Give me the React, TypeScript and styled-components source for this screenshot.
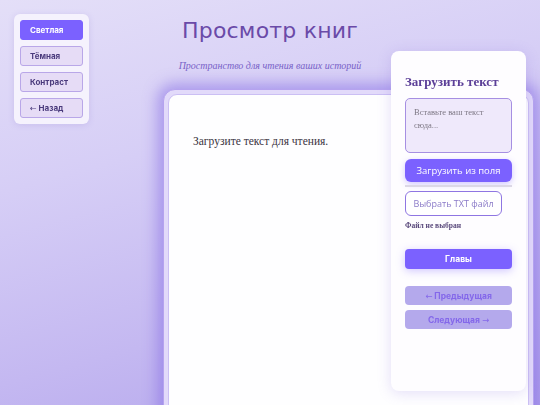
import styled, { createGlobalStyle } from "styled-components";

const GlobalStyle = createGlobalStyle`
	html, body {
		margin: 0;
		padding: 0;
		height: 100%;
		overflow: hidden;
	}
	body {
		font-family: "Liberation Serif", serif;
		background: linear-gradient(165deg, #e4dff8 0%, #d6cef6 35%, #c4b8f1 70%, #b2a4ec 100%);
	}
`;

const themes = [
	{ name: "Светлая", back: false },
	{ name: "Тёмная", back: false },
	{ name: "Контраст", back: false },
	{ name: "Назад", back: true },
];

const App = () => {
	return (
		<>
			<GlobalStyle />
			<Page>
				<Header>
					<Title>Просмотр книг</Title>
					<Subtitle>Пространство для чтения ваших историй</Subtitle>
				</Header>

				<Reader>
					<ReaderInner>
						<Placeholder>Загрузите текст для чтения.</Placeholder>
					</ReaderInner>
				</Reader>
			</Page>

			<ThemeMenu>
				{themes.map((item, index) => (
					<ThemeButton key={item.name} $active={index === 0}>
						{item.back && <Arrow>←</Arrow>} {item.name}
					</ThemeButton>
				))}
			</ThemeMenu>

			<SidePanel>
				<PanelTitle>Загрузить текст</PanelTitle>
				<TextInput placeholder="Вставьте ваш текст сюда..." />
				<PrimaryButton>Загрузить из поля</PrimaryButton>
				<Divider />
				<FileButton>Выбрать TXT файл</FileButton>
				<FileNote>Файл не выбран</FileNote>
				<ChaptersButton>Главы</ChaptersButton>
				<NavGroup>
					<NavButton disabled>
						<Arrow>←</Arrow> Предыдущая
					</NavButton>
					<NavButton disabled>
						Следующая <Arrow>→</Arrow>
					</NavButton>
				</NavGroup>
			</SidePanel>
		</>
	);
};

const Page = styled.div`
	min-height: 405px;
	display: flex;
	flex-direction: column;
`;

const Header = styled.header`
	display: flex;
	flex-direction: column;
	align-items: center;
	padding-top: 18px;
`;

const Title = styled.h1`
	margin: 0;
	font-family: "DejaVu Sans", sans-serif;
	font-weight: 400;
	font-size: 22px;
	letter-spacing: 0.2px;
	color: #6a4aa8;
`;

const Subtitle = styled.p`
	margin: 17px 0 0;
	font-family: "Liberation Serif", serif;
	font-style: italic;
	font-size: 10px;
	color: #7862c8;
`;

const Reader = styled.main`
	margin: 18px 6px 0 163px;
	height: 340px;
	border: 1px solid #b5a3ef;
	border-radius: 12px;
	padding: 4px;
	background: #e2dafa;
	box-shadow: 0 0 14px 6px rgba(128, 102, 228, 0.5);
`;

const ReaderInner = styled.div`
	height: 100%;
	box-sizing: border-box;
	border: 1px solid #cbbff4;
	border-radius: 9px;
	background: #fefeff;
	padding: 40px 24px;
`;

const Placeholder = styled.p`
	margin: 0;
	font-family: "Liberation Serif", serif;
	font-size: 11.5px;
	color: #3b3442;
`;

const ThemeMenu = styled.nav`
	position: fixed;
	top: 14px;
	left: 14px;
	width: 75px;
	box-sizing: border-box;
	padding: 6px;
	display: flex;
	flex-direction: column;
	gap: 6px;
	background: #f5f2fd;
	border-radius: 6px;
	box-shadow: 0 1px 6px rgba(120, 100, 200, 0.18);
`;

const ThemeButton = styled.button<{ $active?: boolean }>`
	height: 20px;
	padding: 0 0 0 9px;
	text-align: left;
	font-family: Inter, sans-serif;
	font-weight: 700;
	font-size: 8px;
	border-radius: 3px;
	border: 1px solid ${(p) => (p.$active ? "#7b61ff" : "#b9a7e8")};
	background: ${(p) => (p.$active ? "#7b61ff" : "#e6dcf6")};
	color: ${(p) => (p.$active ? "#ffffff" : "#4a3a7c")};
`;

const SidePanel = styled.aside`
	position: fixed;
	top: 51px;
	left: 391px;
	width: 135px;
	height: 340px;
	box-sizing: border-box;
	padding: 23px 14px 14px;
	display: flex;
	flex-direction: column;
	background: #fefdff;
	border-radius: 8px;
	box-shadow: 0 2px 14px rgba(130, 105, 220, 0.22);
`;

const PanelTitle = styled.h2`
	margin: 0 0 8px;
	font-family: "Liberation Serif", serif;
	font-weight: 700;
	font-size: 13px;
	color: #5c3f98;
`;

const TextInput = styled.textarea`
	height: 55px;
	box-sizing: border-box;
	resize: none;
	padding: 7px 8px;
	border: 1.5px solid #a68fe2;
	border-radius: 5px;
	background: #efe9fb;
	font-family: "Liberation Serif", serif;
	font-size: 8.5px;
	line-height: 13px;

	&::placeholder {
		color: #7d7784;
	}
`;

const PrimaryButton = styled.button`
	margin-top: 6px;
	height: 23px;
	border: none;
	border-radius: 6px;
	background: #7b61ff;
	color: #ffffff;
	font-family: "Open Sans", sans-serif;
	font-size: 9.5px;
	white-space: nowrap;
	box-shadow: 0 2px 6px rgba(123, 97, 255, 0.35);
`;

const Divider = styled.hr`
	margin: 3px 0 0;
	height: 2px;
	border: none;
	background: #dcd8e6;
`;

const FileButton = styled.button`
	margin-top: 4px;
	width: 97px;
	height: 25px;
	padding: 0;
	border: 1px solid #8f76e2;
	border-radius: 6px;
	background: #ffffff;
	color: #8b7bc8;
	font-family: "Open Sans", sans-serif;
	font-size: 9px;
	white-space: nowrap;
`;

const FileNote = styled.span`
	margin-top: 5px;
	font-family: "Liberation Serif", serif;
	font-weight: 700;
	font-size: 7.5px;
	color: #5a4a7c;
`;

const ChaptersButton = styled.button`
	margin-top: 19px;
	height: 20px;
	border: none;
	border-radius: 4px;
	background: #7b61ff;
	color: #ffffff;
	font-family: Inter, sans-serif;
	font-weight: 700;
	font-size: 8.5px;
	box-shadow: 0 2px 8px rgba(123, 97, 255, 0.35);
`;

const NavGroup = styled.div`
	margin-top: 17px;
	display: flex;
	flex-direction: column;
	gap: 5px;
`;

const NavButton = styled.button`
	height: 19px;
	border: none;
	border-radius: 4px;
	background: #b4a9ec;
	color: #8468ea;
	font-family: Inter, sans-serif;
	font-weight: 700;
	font-size: 8.5px;
`;

const Arrow = styled.span`
	font-family: "DejaVu Sans", sans-serif;
	font-weight: 400;
`;

export default App;
